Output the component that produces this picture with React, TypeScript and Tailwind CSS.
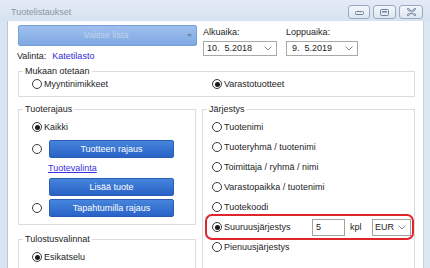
import React from 'react';

function Radio({ checked }: { checked?: boolean }) {
  return (
    <span className="w-[10px] h-[10px] shrink-0 rounded-full border border-[#3a3a3a] bg-white flex items-center justify-center">
      {checked && <span className="w-[5px] h-[5px] rounded-full bg-[#1c1c1c]" />}
    </span>
  );
}

function Option({ label, checked }: { label: string; checked?: boolean }) {
  return (
    <div className="h-[12px] flex items-center gap-[2px]">
      <Radio checked={checked} />
      <span className="whitespace-nowrap">{label}</span>
    </div>
  );
}

function Group({ title, className, children }: { title: string; className?: string; children?: React.ReactNode }) {
  return (
    <div className={`border border-[#dcdcdc] bg-white ${className ?? ''}`}>
      <div className="-mt-[6px] ml-[4px] px-[2px] w-fit h-[11px] leading-[11px] bg-white">{title}</div>
      {children}
    </div>
  );
}

function Chevron() {
  return (
    <svg width="8" height="5" viewBox="0 0 8 5" className="shrink-0">
      <polyline points="0.5,0.5 4,4 7.5,0.5" fill="none" stroke="#8a8a8a" strokeWidth="1" />
    </svg>
  );
}

function BlueButton({ label }: { label: string }) {
  return (
    <button className="w-[125px] h-[18px] rounded-[2px] border border-[#2b5fb6] bg-gradient-to-b from-[#4685dd] to-[#2962c6] text-white text-[9px] leading-[16px]">
      {label}
    </button>
  );
}

function WinButton({ w, children }: { w: string; children: React.ReactNode }) {
  return (
    <div className={`${w} h-[14px] rounded-[3px] border border-[#9aabc0] bg-gradient-to-b from-[#f2f6fb] to-[#dde6f1] flex items-center justify-center`}>
      {children}
    </div>
  );
}

export default function App() {
  return (
    <div className="w-[430px] h-[268px] overflow-hidden flex flex-col bg-[#d9e4f2] text-[9px] leading-[11px] text-[#1d1d1d] font-['Liberation_Sans',Arial,sans-serif]">
      {/* title bar */}
      <div className="h-[21px] shrink-0 flex items-start bg-gradient-to-b from-[#e3ebf5] to-[#d7e2f0] pl-[11px] pr-[7px]">
        <span className="mt-[7px] text-[#8a95a4]">Tuotelistaukset</span>
        <div className="ml-auto mt-[5px] flex gap-[3px]">
          <WinButton w="w-[22px]">
            <svg width="9" height="5" viewBox="0 0 9 5">
              <rect x="0.5" y="1.5" width="8" height="3" rx="1" fill="none" stroke="#6f7f94" />
            </svg>
          </WinButton>
          <WinButton w="w-[23px]">
            <svg width="9" height="7" viewBox="0 0 9 7">
              <rect x="0.5" y="0.5" width="8" height="6" rx="1" fill="none" stroke="#6f7f94" />
              <rect x="2" y="2" width="5" height="1.5" fill="#6f7f94" />
            </svg>
          </WinButton>
          <WinButton w="w-[24px]">
            <svg width="9" height="8" viewBox="0 0 9 8">
              <path d="M1 1 L8 7 M8 1 L1 7" stroke="#6f7f94" strokeWidth="2" strokeLinecap="round" />
              <path d="M1 1 L8 7 M8 1 L1 7" stroke="#eef3f9" strokeWidth="0.7" strokeLinecap="round" />
            </svg>
          </WinButton>
        </div>
      </div>

      <div className="flex-1 flex min-h-0">
        <div className="w-[8px] shrink-0 border-r border-[#b9c7d9]" />
        <div className="flex-1 min-w-0 bg-white pl-[10px] pr-[8px] pt-[4px] flex flex-col">
          {/* top row */}
          <div className="flex">
            <div className="w-[179px]">
              <button className="w-full h-[21px] rounded-[2px] border border-[#779fd9] bg-gradient-to-b from-[#9fc0ee] to-[#7fa8e3] flex items-center text-[#c2d3eb] text-[9px]">
                <span className="flex-1 text-center pl-[6px]">Valitse lista</span>
                <svg width="5" height="3" viewBox="0 0 5 3" className="mr-[4px]">
                  <polygon points="0,0 5,0 2.5,3" fill="#7488a6" />
                </svg>
              </button>
              <div className="mt-[5px] -ml-[1px] h-[11px] flex items-center gap-[6px]">
                <span>Valinta:</span>
                <span className="text-[#2f2ad6]">Katetilasto</span>
              </div>
            </div>
            <div className="ml-[6px] w-[74px] pt-[1px]">
              <div className="h-[12px] leading-[12px]">Alkuaika:</div>
              <div className="mt-[3px] h-[15px] border border-[#a9a9a9] bg-white flex items-center pl-[3px] pr-[4px]">
                <span className="flex-1 whitespace-pre">10.  5.2018</span>
                <Chevron />
              </div>
            </div>
            <div className="ml-[9px] w-[72px] pt-[1px]">
              <div className="h-[12px] leading-[12px]">Loppuaika:</div>
              <div className="mt-[3px] h-[15px] border border-[#a9a9a9] bg-white flex items-center pl-[5px] pr-[4px]">
                <span className="flex-1 whitespace-pre">9.  5.2019</span>
                <Chevron />
              </div>
            </div>
          </div>

          {/* Mukaan otetaan */}
          <Group title="Mukaan otetaan" className="mt-[9px] pb-[6px]">
            <div className="mt-[1px] flex pl-[13px]">
              <div className="w-[180px]">
                <Option label="Myyntinimikkeet" />
              </div>
              <Option label="Varastotuotteet" checked />
            </div>
          </Group>

          {/* lower part */}
          <div className="mt-[12px] flex gap-[6px]">
            <div className="w-[178px] shrink-0 flex flex-col">
              <Group title="Tuoterajaus" className="pb-[7px]">
                <div className="pl-[13px]">
                  <div className="mt-[6px]">
                    <Option label="Kaikki" checked />
                  </div>
                  <div className="mt-[7px] flex items-center gap-[7px]">
                    <Radio />
                    <BlueButton label="Tuotteen rajaus" />
                  </div>
                  <div className="mt-[5px] ml-[16px] h-[11px] underline text-[#3a2fe0]">Tuotevalinta</div>
                  <div className="mt-[4px] ml-[17px]">
                    <BlueButton label="Lisää tuote" />
                  </div>
                  <div className="mt-[3px] flex items-center gap-[7px]">
                    <Radio />
                    <BlueButton label="Tapahtumilla rajaus" />
                  </div>
                </div>
              </Group>
              <Group title="Tulostusvalinnat" className="mt-[14px] h-[40px]">
                <div className="mt-[6px] pl-[13px]">
                  <Option label="Esikatselu" checked />
                </div>
              </Group>
            </div>

            <Group title="Järjestys" className="flex-1 h-[170px]">
              <div className="mt-[6px] flex flex-col gap-[8px]">
                <div className="pl-[9px]"><Option label="Tuotenimi" /></div>
                <div className="pl-[9px]"><Option label="Tuoteryhmä / tuotenimi" /></div>
                <div className="pl-[9px]"><Option label="Toimittaja / ryhmä / nimi" /></div>
                <div className="pl-[9px]"><Option label="Varastopaikka / tuotenimi" /></div>
                <div className="pl-[9px]"><Option label="Tuotekoodi" /></div>
                <div className="-my-[7px] ml-[2px] h-[26px] rounded-[7px] border-2 border-[#e0262c] flex items-center pl-[5px]">
                  <Radio checked />
                  <span className="ml-[2px] w-[88px]">Suuruusjärjestys</span>
                  <div className="w-[33px] h-[17px] border border-[#a3a3a3] bg-white flex items-center pl-[3px]">5</div>
                  <span className="ml-[5px] w-[22px]">kpl</span>
                  <div className="w-[39px] h-[17px] border border-[#a3a3a3] bg-white flex items-center pl-[2px] pr-[4px]">
                    <span className="flex-1">EUR</span>
                    <Chevron />
                  </div>
                </div>
                <div className="pl-[9px]"><Option label="Pienuusjärjestys" /></div>
              </div>
            </Group>
          </div>
        </div>
        <div className="w-[7px] shrink-0 border-l border-[#c6d2e1] bg-[#dce7f5]" />
      </div>
    </div>
  );
}
